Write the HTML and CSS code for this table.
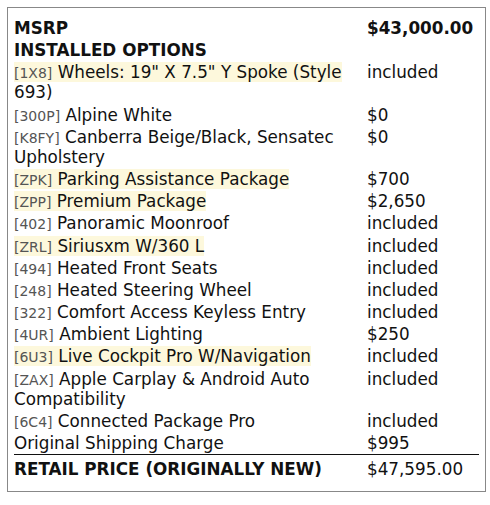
FILE: index.html
```html
<!DOCTYPE html>
<html>
<head>
<meta charset="utf-8">
<link rel="stylesheet" href="styles.css">
</head>
<body>
<div class="box">
<table class="sheet">
<tr class="head"><td>MSRP</td><td>$43,000.00</td></tr>
<tr class="head"><td colspan="2">INSTALLED OPTIONS</td></tr>
<tr><td class="hl"><span class="code">[1X8]</span> Wheels: 19" X 7.5" Y Spoke (Style 693)</td><td>included</td></tr>
<tr><td><span class="code">[300P]</span> Alpine White</td><td>$0</td></tr>
<tr><td><span class="code">[K8FY]</span> Canberra Beige/Black, Sensatec Upholstery</td><td>$0</td></tr>
<tr><td class="hl"><span class="code">[ZPK]</span> Parking Assistance Package</td><td>$700</td></tr>
<tr><td class="hl"><span class="code">[ZPP]</span> Premium Package</td><td>$2,650</td></tr>
<tr><td><span class="code">[402]</span> Panoramic Moonroof</td><td>included</td></tr>
<tr><td class="hl"><span class="code">[ZRL]</span> Siriusxm W/360 L</td><td>included</td></tr>
<tr><td><span class="code">[494]</span> Heated Front Seats</td><td>included</td></tr>
<tr><td><span class="code">[248]</span> Heated Steering Wheel</td><td>included</td></tr>
<tr><td><span class="code">[322]</span> Comfort Access Keyless Entry</td><td>included</td></tr>
<tr><td><span class="code">[4UR]</span> Ambient Lighting</td><td>$250</td></tr>
<tr><td class="hl"><span class="code">[6U3]</span> Live Cockpit Pro W/Navigation</td><td>included</td></tr>
<tr><td><span class="code">[ZAX]</span> Apple Carplay &amp; Android Auto Compatibility</td><td>included</td></tr>
<tr><td><span class="code">[6C4]</span> Connected Package Pro</td><td>included</td></tr>
<tr><td>Original Shipping Charge</td><td>$995</td></tr>
<tr class="total"><td>RETAIL PRICE (ORIGINALLY NEW)</td><td>$47,595.00</td></tr>
</table>
</div>
</body>
</html>
```
FILE: styles.css
```css
html, body {
  margin: 0;
  padding: 0;
  background: #fff;
}
body {
  font-family: "DejaVu Sans", sans-serif;
  font-size: 16.8px;
  line-height: 1.2;
  color: #111;
}
.box {
  margin: 7px 0 0 7px;
  width: 465px;
  border: 1px solid #888;
  padding: 9px 6px 11px 6px;
}
.sheet {
  width: 100%;
  border-collapse: collapse;
}
.sheet td {
  padding: 1px 0;
  vertical-align: top;
}
.sheet td:first-child {
  width: 353px;
}
.head td {
  font-weight: bold;
}
.hl::first-line {
  background: #fdf8dc;
}
.code {
  font-size: 14px;
  line-height: 1;
  color: #555;
}
.total td {
  border-top: 1px solid #111;
  padding-top: 4px;
}
.total td:first-child {
  font-weight: bold;
}
```
